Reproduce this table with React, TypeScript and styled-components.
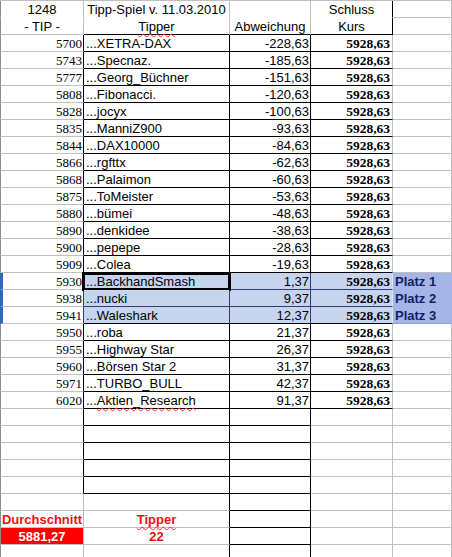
import styled, { createGlobalStyle, css } from "styled-components"

const GRID = "#c0c0c0"
const INK = "#000"
const HL_LINE = "#2c3d78"
const HL_BG = "#c6d4ee"
const PLACE_BG = "#a6b5e8"

const GlobalStyle = createGlobalStyle`
    html, body {
        margin: 0;
        padding: 0;
        background: #fff;
        overflow: hidden;
    }
`

const Sheet = styled.div`
    display: grid;
    grid-template-columns: 84px 146px 81px 82px 1fr;
    grid-auto-rows: 17px;
    width: 452px;
    height: 557px;
    overflow: hidden;
    border-top: 1px solid ${GRID};
    box-sizing: border-box;
    font-family: "Liberation Sans", Arial, sans-serif;
    font-size: 13px;
    color: #000;
`

type CellProps = {
    $r?: string
    $b?: string
    $bg?: string
    $align?: "left" | "right" | "center"
    $mid?: boolean
    $first?: boolean
    $sel?: boolean
}

const Cell = styled.div<CellProps>`
    box-sizing: border-box;
    display: flex;
    align-items: ${(p) => (p.$mid ? "center" : "flex-end")};
    justify-content: ${(p) =>
        p.$align === "right" ? "flex-end" : p.$align === "center" ? "center" : "flex-start"};
    border-right: 1px solid ${(p) => p.$r ?? GRID};
    border-bottom: 1px solid ${(p) => p.$b ?? GRID};
    border-left: ${(p) => (p.$sel ? "3px solid #3366c6" : p.$first ? "1px solid #8c8c8c" : "none")};
    background: ${(p) => p.$bg ?? "transparent"};
    line-height: 15px;
    white-space: nowrap;
`

const TipCell = styled(Cell)`
    justify-content: flex-end;
    padding-right: 1px;
    font-family: "Liberation Serif", "Times New Roman", serif;
`

const NameCell = styled(Cell)<{ $active?: boolean }>`
    padding-left: 2px;
    position: relative;
    ${(p) =>
        p.$active &&
        css`
            &::after {
                content: "";
                position: absolute;
                top: -1px;
                left: -2px;
                right: -2px;
                bottom: -2px;
                border: 3px solid #000;
            }
        `}
`

const DiffCell = styled(Cell)`
    justify-content: flex-end;
    padding-right: 1px;
`

const KursCell = styled(Cell)`
    justify-content: flex-end;
    padding-right: 2px;
    font-family: "Liberation Serif", "Times New Roman", serif;
    font-size: 13.5px;
    font-weight: bold;
`

const PlaceCell = styled(Cell)`
    padding-left: 2px;
    font-weight: bold;
    color: #17205e;
`

const SumLabel = styled(Cell)`
    font-weight: bold;
    color: #ee1111;
`

const RedCell = styled(Cell)`
    font-weight: bold;
    color: #fff;
    background: #ff0000;
`

const Spell = styled.span`
    text-decoration: underline wavy #ff2a2a;
    text-decoration-thickness: 1px;
    text-decoration-skip-ink: none;
    text-underline-offset: 2px;
`

type Row = { tip: number; name: string; diff: string; place?: string }

const rows: Row[] = [
    { tip: 5700, name: "XETRA-DAX", diff: "-228,63" },
    { tip: 5743, name: "Specnaz.", diff: "-185,63" },
    { tip: 5777, name: "Georg_Büchner", diff: "-151,63" },
    { tip: 5808, name: "Fibonacci.", diff: "-120,63" },
    { tip: 5828, name: "jocyx", diff: "-100,63" },
    { tip: 5835, name: "ManniZ900", diff: "-93,63" },
    { tip: 5844, name: "DAX10000", diff: "-84,63" },
    { tip: 5866, name: "rgfttx", diff: "-62,63" },
    { tip: 5868, name: "Palaimon", diff: "-60,63" },
    { tip: 5875, name: "ToMeister", diff: "-53,63" },
    { tip: 5880, name: "bümei", diff: "-48,63" },
    { tip: 5890, name: "denkidee", diff: "-38,63" },
    { tip: 5900, name: "pepepe", diff: "-28,63" },
    { tip: 5909, name: "Colea", diff: "-19,63" },
    { tip: 5930, name: "BackhandSmash", diff: "1,37", place: "Platz 1" },
    { tip: 5938, name: "nucki", diff: "9,37", place: "Platz 2" },
    { tip: 5941, name: "Waleshark", diff: "12,37", place: "Platz 3" },
    { tip: 5950, name: "roba", diff: "21,37" },
    { tip: 5955, name: "Highway Star", diff: "26,37" },
    { tip: 5960, name: "Börsen Star 2", diff: "31,37" },
    { tip: 5971, name: "TURBO_BULL", diff: "42,37" },
    { tip: 6020, name: "Aktien_Research", diff: "91,37" },
]

const DataRow = ({ row, index }: { row: Row; index: number }) => {
    const hl = !!row.place
    const lastHl = hl && !rows[index + 1]?.place
    const line = hl && !lastHl ? HL_LINE : INK
    const bg = hl ? HL_BG : undefined
    return (
        <>
            <TipCell $first $sel={hl} $r={hl ? HL_LINE : INK}>
                {row.tip}
            </TipCell>
            <NameCell $active={index === 14} $r={hl ? HL_LINE : INK} $b={line} $bg={bg}>
                {row.name === "Aktien_Research" ? (
                    <span>
                        ...<Spell>Aktien_Research</Spell>
                    </span>
                ) : (
                    `...${row.name}`
                )}
            </NameCell>
            <DiffCell $r={hl ? HL_LINE : INK} $b={line} $bg={bg}>
                {row.diff}
            </DiffCell>
            <KursCell $r={hl ? "#dbe3f5" : GRID} $b={line} $bg={bg}>
                5928,63
            </KursCell>
            {hl ? (
                <PlaceCell $bg={PLACE_BG} $b={lastHl ? "#8d9fdc" : PLACE_BG} $r={PLACE_BG}>
                    {row.place}
                </PlaceCell>
            ) : (
                <Cell />
            )}
        </>
    )
}

const EmptyRow = ({ boxed }: { boxed: boolean }) => (
    <>
        <Cell $first $r={boxed ? INK : GRID} />
        <Cell $r={INK} $b={boxed ? INK : GRID} />
        <Cell $r={INK} $b={INK} />
        <Cell />
        <Cell />
    </>
)

export default function App() {
    return (
        <>
            <GlobalStyle />
            <Sheet>
                <Cell $first $align="center" $mid $b="#fff">
                    1248
                </Cell>
                <Cell $align="center" $mid $b="#fff">
                    Tipp-Spiel v. 11.03.2010
                </Cell>
                <Cell $mid $b="#fff" />
                <Cell $align="center" $mid $r={INK} $b="#fff">
                    Schluss
                </Cell>
                <Cell />

                <Cell $first $align="center" $mid>
                    - TIP -
                </Cell>
                <Cell $align="center" $mid $b={INK}>
                    <Spell>Tipper</Spell>
                </Cell>
                <Cell $align="center" $mid $b={INK}>
                    Abweichung
                </Cell>
                <Cell $align="center" $mid $r={INK} $b={INK}>
                    Kurs
                </Cell>
                <Cell />

                {rows.map((row, i) => (
                    <DataRow key={row.tip} row={row} index={i} />
                ))}

                {[0, 1, 2, 3, 4].map((i) => (
                    <EmptyRow key={i} boxed />
                ))}
                <EmptyRow boxed={false} />

                <SumLabel $first $align="center" $mid>
                    Durchschnitt
                </SumLabel>
                <SumLabel $align="center" $mid $r={INK}>
                    <Spell>Tipper</Spell>
                </SumLabel>
                <Cell $r={INK} $b={INK} />
                <Cell />
                <Cell />

                <RedCell $first $align="center" $mid>
                    5881,27
                </RedCell>
                <SumLabel $align="center" $mid $r={INK}>
                    22
                </SumLabel>
                <Cell $r={INK} $b={INK} />
                <Cell />
                <Cell />

                <EmptyRow boxed={false} />
            </Sheet>
        </>
    )
}
